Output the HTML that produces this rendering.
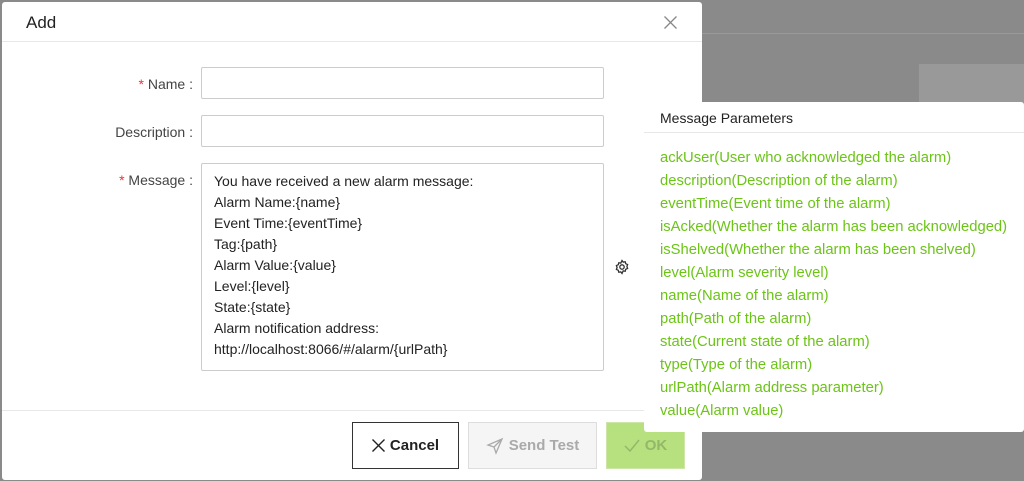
<!DOCTYPE html>
<html><head><style>
*{box-sizing:border-box;margin:0;padding:0}
body{width:1024px;height:481px;background:#8a8a8a;font-family:"Liberation Sans",sans-serif;position:relative;overflow:hidden;color:#333}
.bgline{position:absolute;left:702px;top:33px;width:322px;height:1px;background:#9a9a9a}
.bgblk{position:absolute;left:919px;top:64px;width:105px;height:40px;background:#999}
.dlg{position:absolute;left:2px;top:2px;width:700px;height:478px;background:#fff;border-radius:3px}
.hd{height:40px;border-bottom:1px solid #e8e8e8;font-size:17px;padding:11px 0 0 24px;color:#222}
.lbl{position:absolute;right:509px;font-size:14px;color:#444;white-space:nowrap}
.lbl b{color:#e33;font-weight:normal}
.in{position:absolute;left:199px;width:403px;border:1px solid #ccc;border-radius:2px}
.msg{font-size:14px;line-height:21px;padding:7px 12px;color:#222}
.ft{position:absolute;left:0;top:408px;width:700px;height:1px;background:#e8e8e8}
.btn{position:absolute;top:420px;height:47px;font-size:15px;font-weight:bold;display:flex;align-items:center;justify-content:center;gap:5px}
.pop{position:absolute;left:644px;top:102px;width:380px;height:330px;background:#fff;border-radius:3px}
.pop .t{height:31px;border-bottom:1px solid #e8e8e8;font-size:14px;padding:8px 0 0 16px;color:#222}
.pop ul{list-style:none;padding:14px 0 0 16px;color:#6cc417;font-size:14.8px;line-height:23px;white-space:nowrap}
</style></head><body>
<div class="bgline"></div><div class="bgblk"></div>
<div class="dlg">
<div class="hd">Add</div>
<svg style="position:absolute;left:662px;top:14px" width="13" height="13" viewBox="0 0 13 13" stroke="#888" stroke-width="1.3"><path d="M0.5 0.5L12.5 12.5M12.5 0.5L0.5 12.5"/></svg>
<div class="lbl" style="top:74px"><b>*</b> Name :</div>
<div class="in" style="top:65px;height:32px"></div>
<div class="lbl" style="top:122px">Description :</div>
<div class="in" style="top:113px;height:32px"></div>
<div class="lbl" style="top:170px"><b>*</b> Message :</div>
<div class="in msg" style="top:161px;height:208px">You have received a new alarm message:<br>Alarm Name:{name}<br>Event Time:{eventTime}<br>Tag:{path}<br>Alarm Value:{value}<br>Level:{level}<br>State:{state}<br>Alarm notification address:<br>http://localhost:8066/#/alarm/{urlPath}</div>
<svg style="position:absolute;left:612px;top:257px" width="16" height="16" viewBox="0 0 16 16" fill="none" stroke="#333" stroke-width="1.3"><circle cx="8" cy="8" r="2.2"/><path d="M8 1.5l1.2 1.6 2-.4.5 2 1.9.9-.7 1.9.7 1.9-1.9.9-.5 2-2-.4L8 14.5l-1.2-1.6-2 .4-.5-2-1.9-.9.7-1.9-.7-1.9 1.9-.9.5-2 2 .4z"/></svg>
<div class="ft"></div>
<div class="btn" style="left:350px;width:107px;border:1px solid #333;color:#222"><svg width="13" height="13" viewBox="0 0 13 13" stroke="#222" stroke-width="1.4"><path d="M0.5 0.5L12.5 12.5M12.5 0.5L0.5 12.5"/></svg>Cancel</div>
<div class="btn" style="left:466px;width:129px;border:1px solid #ddd;background:#f5f5f5;color:#aaa"><svg width="18" height="18" viewBox="0 0 18 18" fill="none" stroke="#aaa" stroke-width="1.3"><path d="M16 2L2 8l6 2 2 6z M8 10l8-8"/></svg>Send Test</div>
<div class="btn" style="left:604px;width:79px;background:#b7e07f;border:1px solid #cde6a8;color:#94b86a"><svg width="16" height="14" viewBox="0 0 16 14" fill="none" stroke="#94b86a" stroke-width="1.5"><path d="M1 7l5 5L15 1"/></svg>OK</div>
</div>
<div class="pop"><div class="t">Message Parameters</div>
<ul><li>ackUser(User who acknowledged the alarm)</li><li>description(Description of the alarm)</li><li>eventTime(Event time of the alarm)</li><li>isAcked(Whether the alarm has been acknowledged)</li><li>isShelved(Whether the alarm has been shelved)</li><li>level(Alarm severity level)</li><li>name(Name of the alarm)</li><li>path(Path of the alarm)</li><li>state(Current state of the alarm)</li><li>type(Type of the alarm)</li><li>urlPath(Alarm address parameter)</li><li>value(Alarm value)</li></ul></div>
</body></html>
